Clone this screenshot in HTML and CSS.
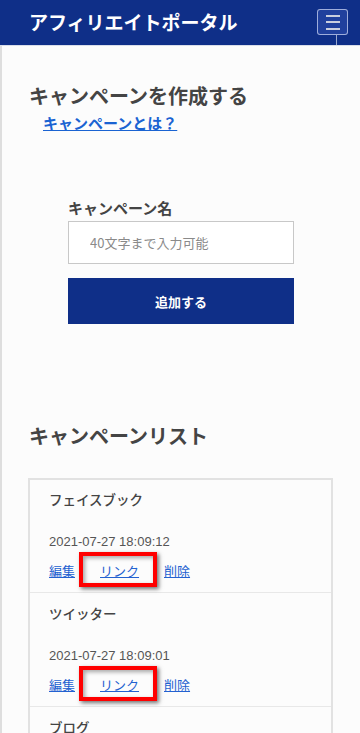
FILE: index.html
```html
<!DOCTYPE html>
<html lang="ja">
<head>
<meta charset="utf-8">
<meta name="viewport" content="width=device-width, initial-scale=1">
<title>アフィリエイトポータル</title>
<link rel="stylesheet" href="styles.css">
</head>
<body>
<header class="topbar">
  <div class="brand">アフィリエイトポータル</div>
  <button class="menu-btn" aria-label="menu">
    <span class="bar"></span><span class="bar"></span><span class="bar"></span>
  </button>
</header>
<main class="page">
  <section class="create">
    <h1 class="title">キャンペーンを作成する</h1>
    <a class="about-link" href="#">キャンペーンとは？</a>
    <form class="form">
      <label class="label" for="cname">キャンペーン名</label>
      <input class="input" id="cname" type="text" placeholder="40文字まで入力可能">
      <button class="submit" type="button">追加する</button>
    </form>
  </section>
  <section class="list-section">
    <h2 class="title">キャンペーンリスト</h2>
    <div class="card">
      <div class="item">
        <div class="name">フェイスブック</div>
        <div class="date">2021-07-27 18:09:12</div>
        <div class="actions">
          <a href="#">編集</a>
          <a href="#" class="marked">リンク</a>
          <a href="#">削除</a>
        </div>
      </div>
      <div class="item">
        <div class="name">ツイッター</div>
        <div class="date">2021-07-27 18:09:01</div>
        <div class="actions">
          <a href="#">編集</a>
          <a href="#" class="marked">リンク</a>
          <a href="#">削除</a>
        </div>
      </div>
      <div class="item">
        <div class="name">ブログ</div>
        <div class="date">2021-07-27 18:08:40</div>
        <div class="actions">
          <a href="#">編集</a>
          <a href="#">リンク</a>
          <a href="#">削除</a>
        </div>
      </div>
    </div>
  </section>
</main>
</body>
</html>
```
FILE: styles.css
```css
* { box-sizing: border-box; }
html, body { margin: 0; padding: 0; }
body {
  background: #fcfcfc;
  font-family: "Noto Sans CJK JP", "Noto Sans", sans-serif;
  color: #444;
}
.topbar {
  height: 46px;
  background: #0f2f88;
  border-bottom: 1px solid #d9deea;
  display: flex;
  align-items: center;
  justify-content: space-between;
  padding: 0 12px 0 29px;
}
.brand {
  color: #fff;
  font-size: 19px;
  font-weight: 700;
  line-height: 24px;
  margin-top: -2px;
}
.menu-btn {
  position: relative;
  width: 31px;
  height: 26px;
  margin-top: -1px;
  padding: 0;
  border: 1px solid rgba(200, 210, 240, 0.75);
  border-radius: 3px;
  background: #20409d;
  display: flex;
  flex-direction: column;
  align-items: center;
  justify-content: center;
  gap: 4.5px;
}
.menu-btn::after {
  content: "";
  position: absolute;
  left: 18px;
  top: 25px;
  width: 1px;
  height: 10px;
  background: rgba(190, 200, 225, 0.8);
}
.bar {
  display: block;
  width: 14px;
  height: 2px;
  background: #c9cede;
}
.page {
  border-left: 2px solid #dedede;
  padding: 0 0 40px 27px;
  min-height: 690px;
}
.title {
  margin: 0;
  font-size: 20px;
  font-weight: 700;
  line-height: 28px;
  color: #444;
}
.create { padding-top: 36px; }
.about-link {
  display: inline-block;
  margin: 2px 0 0 14px;
  font-size: 15px;
  font-weight: 700;
  line-height: 20px;
  color: #1a63d2;
  text-decoration: underline;
}
.form {
  display: flex;
  flex-direction: column;
  width: 226px;
  margin: 64px 0 0 39px;
}
.label {
  font-size: 15px;
  font-weight: 700;
  line-height: 20px;
  color: #444;
}
.input {
  margin-top: 3px;
  height: 43px;
  border: 1px solid #c8c8c8;
  background: #fff;
  padding: 0 0 0 21px;
  font-family: "Noto Sans CJK JP", sans-serif;
  font-size: 13px;
  color: #444;
  outline: none;
}
.input::placeholder { color: #8a8a8a; }
.submit {
  margin-top: 14px;
  height: 46px;
  border: 0;
  background: #0f2f88;
  color: #fff;
  font-family: "Noto Sans CJK JP", sans-serif;
  font-size: 13px;
  font-weight: 700;
}
.list-section { padding-top: 98px; }
.card {
  margin: 28px 0 0 -1px;
  width: 305px;
  border: 2px solid #e2e2e2;
  border-bottom: 0;
  background: #fcfcfc;
}
.item {
  padding: 11px 19px 12px;
  border-top: 1px solid #e8e8e8;
}
.item:first-child { border-top: 0; padding-top: 10px; }
.name {
  font-size: 13.5px;
  line-height: 18px;
  color: #444;
  font-weight: 500;
}
.date {
  margin-top: 25px;
  font-family: "Liberation Sans", Arial, sans-serif;
  font-size: 13px;
  line-height: 18px;
  color: #555;
}
.actions {
  margin-top: 11px;
  display: flex;
  gap: 25px;
  font-size: 13px;
  line-height: 18px;
}
.actions a {
  color: #2361d0;
  text-decoration: underline;
}
.marked { position: relative; }
.marked::after {
  content: "";
  position: absolute;
  top: -10px;
  bottom: -7px;
  left: -21px;
  right: -18px;
  border: 4px solid #ff0000;
  box-shadow: 2px 2px 4px rgba(0, 0, 0, 0.55), inset 2px 2px 4px rgba(0, 0, 0, 0.35);
  pointer-events: none;
}
```
